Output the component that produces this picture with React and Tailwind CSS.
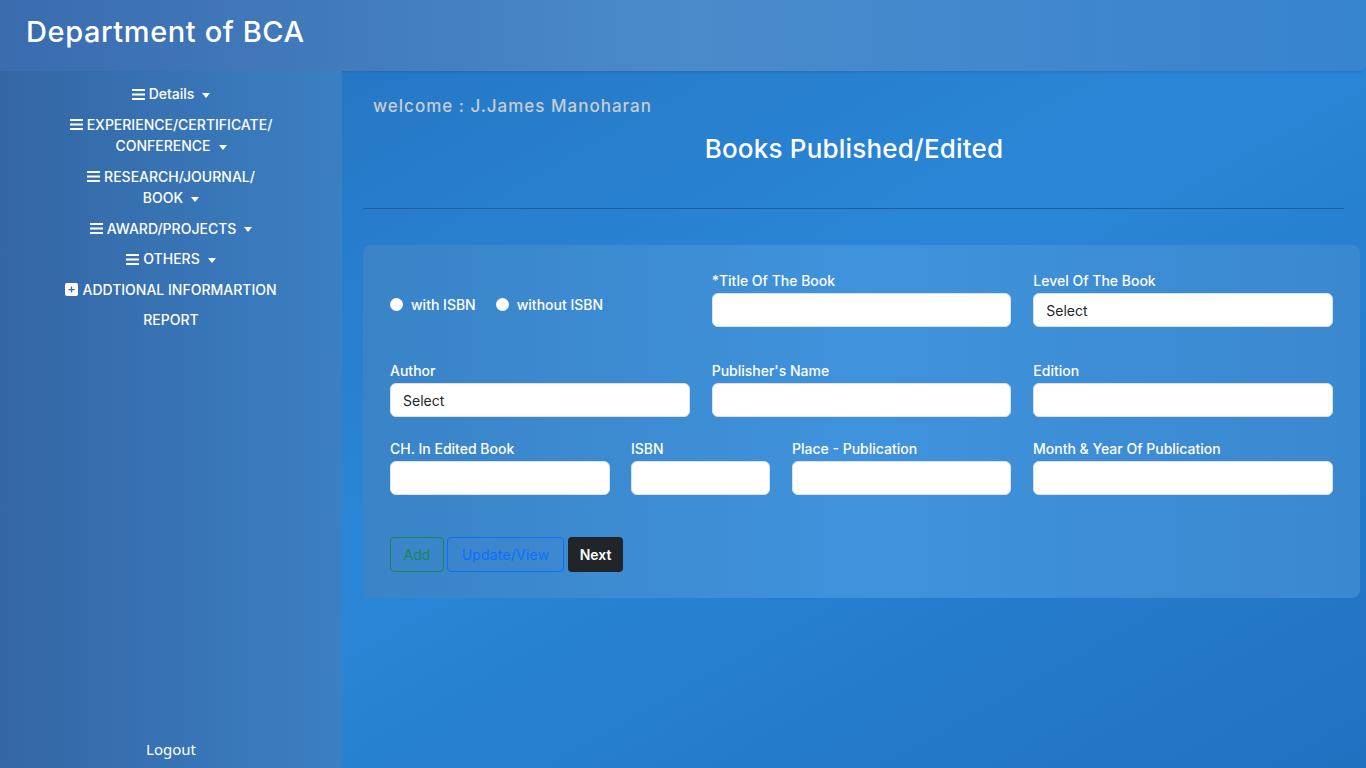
import { useState } from 'react';

const font = { fontFamily: 'Inter, "Noto Sans", sans-serif' };

const Caret = () => (
  <span className="inline-block ml-2 align-middle border-t-[5px] border-t-white border-x-[4px] border-x-transparent" />
);

const Bars = () => (
  <svg className="inline-block mr-1 -mt-0.5" width="13" height="11" viewBox="0 0 13 11" fill="white">
    <rect x="0" y="0" width="13" height="2" />
    <rect x="0" y="4.5" width="13" height="2" />
    <rect x="0" y="9" width="13" height="2" />
  </svg>
);

const PlusBox = () => (
  <svg className="inline-block mr-1 -mt-0.5" width="13" height="13" viewBox="0 0 13 13">
    <rect x="0" y="0" width="13" height="13" rx="2" fill="white" />
    <rect x="3.5" y="6" width="6" height="1.3" fill="#3a6fae" />
    <rect x="5.85" y="3.5" width="1.3" height="6" fill="#3a6fae" />
  </svg>
);

const Field = ({ label, value, className = '' }) => (
  <div className={`flex flex-col ${className}`}>
    <label className="text-[14px] font-medium text-white leading-[20px] mb-[2px]">{label}</label>
    <div className="h-[34px] bg-white rounded-[6px] border border-[#dee2e6] px-3 flex items-center text-[14px] text-[#212529]">
      {value}
    </div>
  </div>
);

export default function App() {
  const [isbn, setIsbn] = useState(null);

  return (
    <div className="w-[1366px] h-[768px] overflow-hidden flex flex-col bg-gradient-to-br from-[#2370bd] via-[#2a87d7] to-[#2171c1]" style={font}>
      <header className="h-[71px] shrink-0 flex items-center px-[26px] rounded-br-md bg-gradient-to-r from-[#3a6cae] via-[#4a8bcb] to-[#3784cf] shadow-sm">
        <h1 className="text-[29px] font-medium text-white tracking-[0.6px] -mt-[8px]">Department of BCA</h1>
      </header>

      <div className="flex flex-1 min-h-0">
        <aside className="w-[342px] shrink-0 flex flex-col items-center justify-between pt-[12px] pb-[8px] bg-gradient-to-r from-[#3466a4] to-[#3b80c3]">
          <nav className="flex flex-col items-center text-white text-[14px] font-medium leading-[21.5px] text-center gap-[9px]">
            <div><Bars />Details<Caret /></div>
            <div><Bars />EXPERIENCE/CERTIFICATE/<br />CONFERENCE<Caret /></div>
            <div><Bars />RESEARCH/JOURNAL/<br />BOOK<Caret /></div>
            <div><Bars />AWARD/PROJECTS<Caret /></div>
            <div><Bars />OTHERS<Caret /></div>
            <div><PlusBox />ADDTIONAL INFORMARTION</div>
            <div>REPORT</div>
          </nav>
          <div className="text-white text-[15px]" style={{ fontFamily: '"Noto Sans", sans-serif' }}>Logout</div>
        </aside>

        <main className="flex-1 flex flex-col pl-[21px] pr-[6px]">
          <p className="pl-[10px] pt-[24px] text-[17px] font-medium text-[#c9cdd3] leading-[22px] tracking-[1px]">welcome : J.James Manoharan</p>
          <h2 className="text-center text-[26px] font-medium text-white mt-[15px] leading-[34px] pr-[15px] tracking-[0.2px]">Books Published/Edited</h2>
          <hr className="mt-[42px] mr-[16px] border-t border-[#1f5e9c]" />

          <section className="mt-[36px] rounded-[8px] bg-gradient-to-r from-[#3a83c7] via-[#3f93dc] to-[#3a88d0] pl-[27px] pr-[27px] pt-[26px] pb-[26px]">
            <div className="grid grid-cols-3 gap-x-[22px] gap-y-[20px]">
              <div className="flex items-end pb-[12px] gap-5 text-white text-[14px] font-medium">
                <label className="flex items-center gap-2" onClick={() => setIsbn('with')}>
                  <span className="w-[13px] h-[13px] rounded-full bg-white" />
                  with ISBN
                </label>
                <label className="flex items-center gap-2" onClick={() => setIsbn('without')}>
                  <span className="w-[13px] h-[13px] rounded-full bg-white" />
                  without ISBN
                </label>
              </div>
              <Field label="*Title Of The Book" />
              <Field label="Level Of The Book" value="Select" />
              <Field label="Author" value="Select" className="mt-[14px]" />
              <Field label="Publisher's Name" className="mt-[14px]" />
              <Field label="Edition" className="mt-[14px]" />
            </div>

            <div className="flex mt-[22px]">
              <Field label="CH. In Edited Book" className="w-[220px]" />
              <Field label="ISBN" className="w-[139px] ml-[21px]" />
              <Field label="Place - Publication" className="w-[219px] ml-[22px]" />
              <Field label="Month & Year Of Publication" className="flex-1 ml-[22px]" />
            </div>

            <div className="flex gap-[3px] mt-[42px]">
              <button className="h-[35px] w-[54px] rounded-[4px] border border-[#198754] text-[#198754] text-[14px]">Add</button>
              <button className="h-[35px] w-[117px] rounded-[4px] border border-[#0d6efd] text-[#0d6efd] text-[14px] tracking-[0.2px]">Update/View</button>
              <button className="h-[35px] w-[55px] ml-[1px] rounded-[4px] bg-[#212529] text-white text-[14px] font-semibold">Next</button>
            </div>
          </section>
        </main>
      </div>
    </div>
  );
}
